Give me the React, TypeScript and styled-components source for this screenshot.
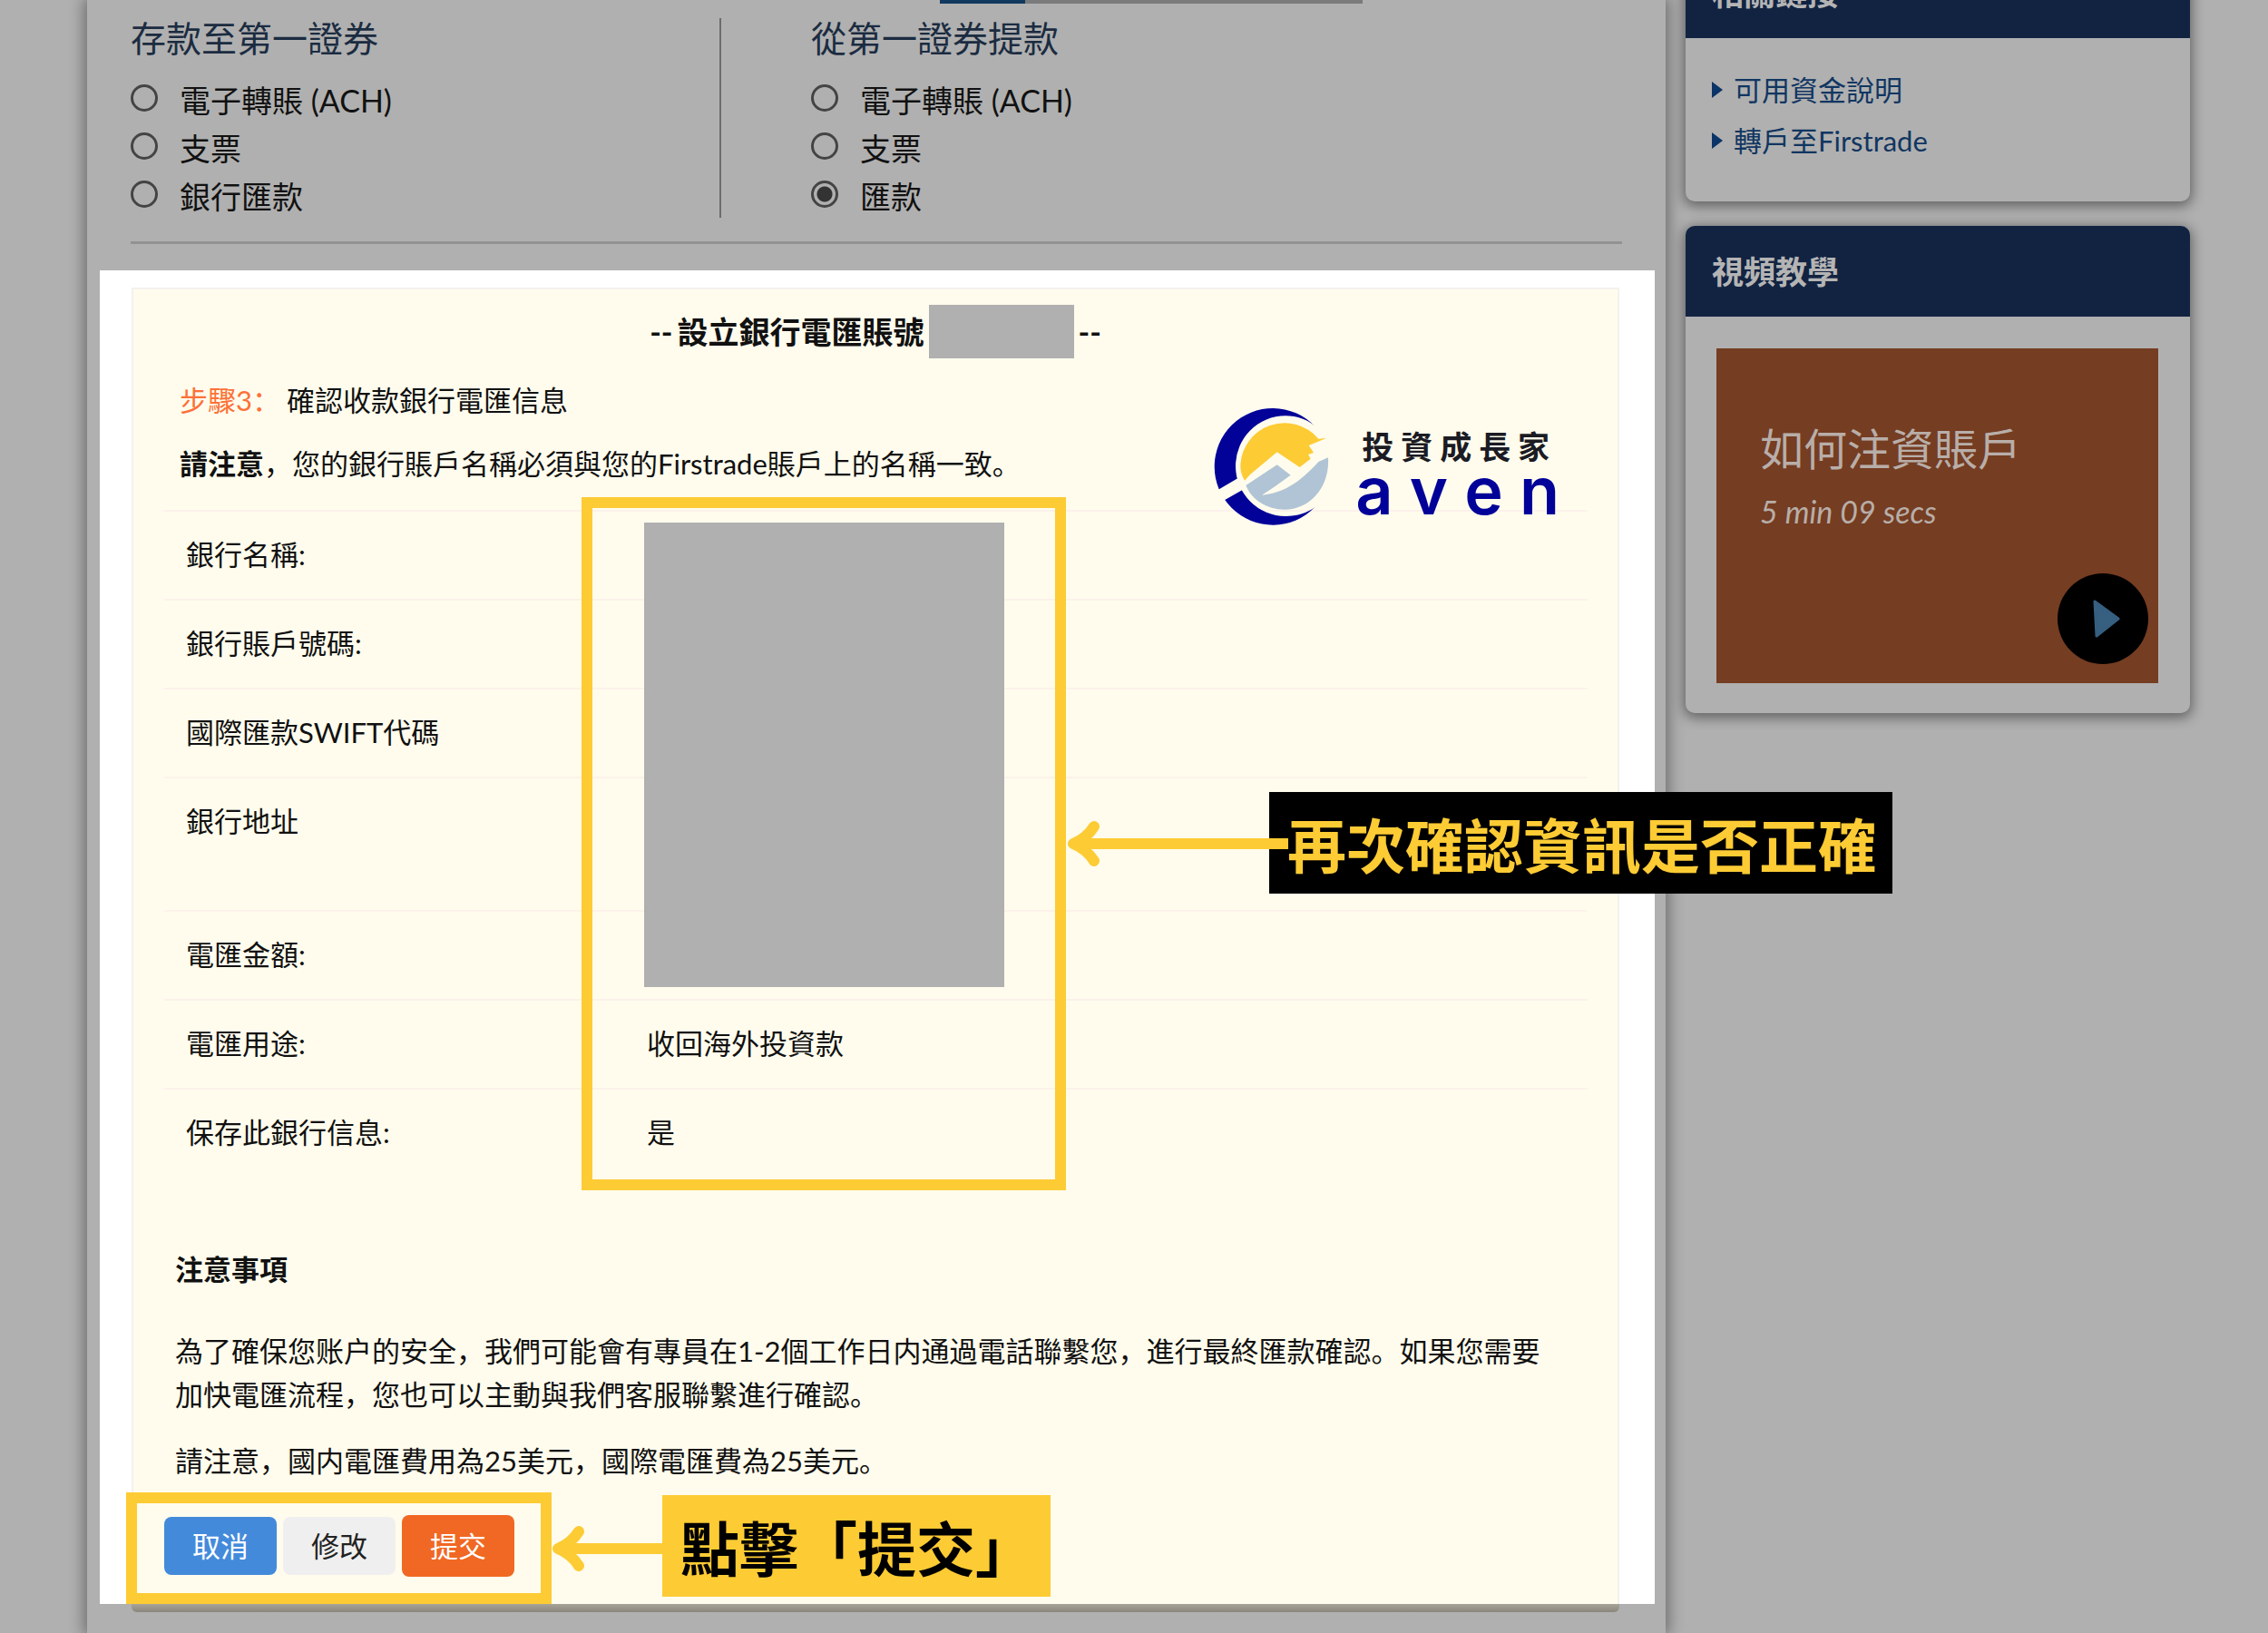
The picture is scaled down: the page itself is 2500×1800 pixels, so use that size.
import React, { useState } from "react";
import styled, { createGlobalStyle } from "styled-components";

const GlobalStyle = createGlobalStyle`
  *, *::before, *::after { box-sizing: border-box; }
  body {
    margin: 0;
    background: #b0b0b0;
    color: #111;
    font-family: Lato, "Noto Sans CJK SC", sans-serif;
    font-size: 31px;
    line-height: 48px;
  }
  h1, h2, h3, p, ul, fieldset { margin: 0; padding: 0; border: 0; }
`;

const Page = styled.div`
  display: grid;
  grid-template-columns: minmax(0, 1fr) 556px;
  column-gap: 22px;
  min-height: 100vh;
  padding: 0 86px 0 96px;
  overflow: hidden;
`;

const MainPanel = styled.main`
  position: relative;
  z-index: 1;
  background: #b0b0b0;
  box-shadow: 0 0 16px 3px rgba(0, 0, 0, 0.4);
`;

const Transfer = styled.section`
  padding: 0 48px;
`;

const TabTrack = styled.div`
  width: 466px;
  height: 4px;
  margin-left: 892px;
  background: linear-gradient(to right, #12395f 94px, #7b7b7b 94px);
`;

const TransferColumns = styled.div`
  display: grid;
  grid-template-columns: 649px 2px minmax(0, 1fr);
  padding: 16px 0 23px;
  border-bottom: 3px solid #929292;
`;

const Divider = styled.div`
  margin-bottom: 3px;
  background: #6c6c6c;
`;

const TransferGroup = styled.fieldset<{ $inset?: boolean }>`
  min-width: 0;
  padding-left: ${(p) => (p.$inset ? "99px" : "0")};
`;

const GroupTitle = styled.legend`
  float: left;
  width: 100%;
  margin-bottom: 20px;
  padding: 0;
  color: #1b2c41;
  font-size: 39px;
  line-height: 44px;
`;

const RadioRow = styled.label`
  clear: both;
  display: flex;
  gap: 24px;
  font-size: 34px;
  line-height: 53px;
`;

const Radio = styled.input`
  appearance: none;
  flex: none;
  width: 30px;
  height: 30px;
  margin: 9px 0 0;
  border: 3px solid #444;
  border-radius: 50%;
  &:checked {
    background: radial-gradient(circle, #333 8px, transparent 9px);
  }
`;

const Highlight = styled.div`
  margin: 29px 12px 0 14px;
  padding: 19px 39px 0 35px;
  background: #fff;
`;

const WireCard = styled.section`
  position: relative;
  padding: 17px 0 30px;
  border: 2px solid #f4f1ee;
  border-bottom: 0;
  background: #fffced;
`;

const CardFoot = styled.div`
  height: 9px;
  margin: 0 51px 0 49px;
  border-radius: 0 0 6px 6px;
  background: linear-gradient(#a8a498, #8b867c);
`;

const WireTitle = styled.h1`
  display: flex;
  align-items: center;
  justify-content: center;
  gap: 5px;
  font-size: 34px;
  line-height: 59px;
`;

const Redaction = styled.span`
  width: 160px;
  height: 59px;
  background: #b0b0b0;
`;

const StepLine = styled.p`
  margin-top: 22px;
  padding-left: 51px;
`;

const StepNumber = styled.span`
  margin-right: 7px;
  color: #fc7138;
`;

const TableArea = styled.div`
  position: relative;
  margin: 27px 33px 0 34px;
`;

const WireTable = styled.table`
  width: 100%;
  border-collapse: separate;
  border-spacing: 0;
  table-layout: fixed;
`;

const Row = styled.tr<{ $tall?: boolean }>`
  height: ${(p) => (p.$tall ? "147px" : "98px")};
  vertical-align: top;
`;

const cell = `
  padding: 23px 0 0;
  border-top: 2px solid #fcf2ea;
  font-weight: 400;
  text-align: left;
`;

const LabelCell = styled.th`
  ${cell}
  width: 532px;
  padding-left: 24px;
`;

const ValueCell = styled.td`
  ${cell}
`;

const ValueRedaction = styled.div`
  position: absolute;
  top: 14px;
  left: 529px;
  width: 397px;
  height: 512px;
  background: #b0b0b0;
`;

const Frame = styled.div<{ $x: number; $y: number; $w: number; $h: number }>`
  position: absolute;
  left: ${(p) => p.$x}px;
  top: ${(p) => p.$y}px;
  width: ${(p) => p.$w}px;
  height: ${(p) => p.$h}px;
  border: 12px solid #fdcb34;
  pointer-events: none;
`;

const Callout = styled.strong<{ $x: number; $y: number; $w: number; $dark?: boolean }>`
  position: absolute;
  left: ${(p) => p.$x}px;
  top: ${(p) => p.$y}px;
  width: ${(p) => p.$w}px;
  padding-left: 20px;
  background: ${(p) => (p.$dark ? "#000" : "#fdcb34")};
  color: ${(p) => (p.$dark ? "#fdcb34" : "#000")};
  font-family: "Noto Sans CJK TC", sans-serif;
  font-size: 65px;
  line-height: 112px;
  white-space: nowrap;
`;

const ArrowSvg = styled.svg<{ $x: number; $y: number }>`
  position: absolute;
  left: ${(p) => p.$x}px;
  top: ${(p) => p.$y}px;
  fill: none;
  stroke: #fdcb34;
  stroke-width: 12px;
  stroke-linejoin: round;
  pointer-events: none;
`;

const Notes = styled.div`
  display: flex;
  flex-direction: column;
  gap: 25px;
  margin-top: 78px;
  padding: 0 62px 0 46px;
`;

const NotesTitle = styled.h2`
  margin-bottom: 17px;
  font-size: 31px;
`;

const Actions = styled.div`
  position: relative;
  display: flex;
  align-items: center;
  gap: 7px;
  margin: 36px 0 0 34px;
`;

const ActionButton = styled.button<{ $bg: string; $fg: string; $tall?: boolean }>`
  width: 124px;
  height: ${(p) => (p.$tall ? "68px" : "64px")};
  padding: 0;
  border: 0;
  border-radius: 8px;
  background: ${(p) => p.$bg};
  color: ${(p) => p.$fg};
  font: inherit;
`;

const Brand = styled.div`
  position: absolute;
  z-index: 1;
  top: 130px;
  right: 64px;
  display: flex;
  align-items: flex-start;
  gap: 28px;
`;

const BrandText = styled.div`
  display: flex;
  flex-direction: column;
  padding-top: 18px;
  font-family: Inter, "Noto Sans CJK TC", sans-serif;
`;

const BrandName = styled.span`
  padding-left: 7px;
  color: #1b1b24;
  font-family: "Noto Sans CJK TC", sans-serif;
  font-size: 35px;
  font-weight: 700;
  line-height: 48px;
`;

const BrandLatin = styled.span`
  color: #020299;
  font-size: 72px;
  font-weight: 600;
  line-height: 52px;
`;

const Sidebar = styled.aside`
  display: flex;
  flex-direction: column;
  gap: 27px;
  margin-top: -58px;
`;

const SideCard = styled.section`
  border-radius: 10px;
  background: #b0b0b0;
  box-shadow: 0 3px 14px 2px rgba(0, 0, 0, 0.45);
`;

const SideTitle = styled.h2`
  padding-left: 29px;
  border-radius: 10px 10px 0 0;
  background: #122342;
  color: #b4b4b4;
  font-size: 35px;
  line-height: 100px;
`;

const LinkList = styled.ul`
  padding: 29px 29px 39px;
  list-style: none;
`;

const SideLink = styled.a`
  display: flex;
  align-items: center;
  gap: 12px;
  color: #103661;
  line-height: 56px;
  text-decoration: none;
`;

const VideoWrap = styled.div`
  padding: 35px 35px 33px 34px;
`;

const Video = styled.div`
  position: relative;
  height: 369px;
  padding: 79px 48px;
  background: #753d22;
  color: #b8aea9;
`;

const VideoTitle = styled.h3`
  font-size: 48px;
  font-weight: 400;
  line-height: 64px;
`;

const VideoTime = styled.p`
  margin-top: 13px;
  font-size: 34px;
  font-style: italic;
`;

const PlayButton = styled.button`
  position: absolute;
  right: 11px;
  bottom: 21px;
  display: flex;
  align-items: center;
  justify-content: center;
  width: 100px;
  height: 100px;
  padding: 0 0 0 8px;
  border: 0;
  border-radius: 50%;
  background: #000;
`;

function RadioGroup(props: { name: string; title: string; options: string[]; initial?: string; inset?: boolean }) {
  const [value, setValue] = useState(props.initial ?? "");
  return (
    <TransferGroup $inset={props.inset}>
      <GroupTitle>{props.title}</GroupTitle>
      {props.options.map((option) => (
        <RadioRow key={option}>
          <Radio type="radio" name={props.name} checked={value === option} onChange={() => setValue(option)} />
          {option}
        </RadioRow>
      ))}
    </TransferGroup>
  );
}

function Arrow({ x, y, length }: { x: number; y: number; length: number }) {
  return (
    <ArrowSvg $x={x} $y={y} width={length} height={52} viewBox={`0 0 ${length} 52`} aria-hidden="true">
      <path d={`M8 26H${length}`} />
      <path d="M31 7C26 15 18 22 8 26C18 30 26 37 31 45" strokeLinecap="round" />
    </ArrowSvg>
  );
}

function BrandMark() {
  return (
    <svg width="128" height="130" viewBox="116 88 384 390" aria-hidden="true">
      <path fill="#020299" d="M450 150A193 193 0 1 0 450 418C428 436 392 448 353 448A165 166 0 0 1 353 116C392 116 428 130 450 150Z" />
      <path fill="#fffced" d="M118 368L196 322L220 356L146 398Z" />
      <path fill="#fdcb34" d="M218 330C208 312 204 298 204 283A146 146 0 0 1 462 192L488 190L430 214L446 238L428 244L436 258L400 286L325 236L236 310Z" />
      <path fill="#b0c4d6" d="M222 346L325 278L370 312L318 350L275 378C340 372 396 342 462 268L494 254C500 350 436 426 350 426C290 426 240 392 222 346Z" />
    </svg>
  );
}

const rows = [
  { label: "銀行名稱:", value: "" },
  { label: "銀行賬戶號碼:", value: "" },
  { label: "國際匯款SWIFT代碼", value: "" },
  { label: "銀行地址", value: "", tall: true },
  { label: "電匯金額:", value: "" },
  { label: "電匯用途:", value: "收回海外投資款" },
  { label: "保存此銀行信息:", value: "是" },
];

const links = ["可用資金說明", "轉戶至Firstrade"];

export default function App() {
  return (
    <>
      <GlobalStyle />
      <Page>
        <MainPanel>
          <Transfer>
            <TabTrack />
            <TransferColumns>
              <RadioGroup name="deposit" title="存款至第一證券" options={["電子轉賬 (ACH)", "支票", "銀行匯款"]} />
              <Divider />
              <RadioGroup
                name="withdraw"
                title="從第一證券提款"
                options={["電子轉賬 (ACH)", "支票", "匯款"]}
                initial="匯款"
                inset
              />
            </TransferColumns>
          </Transfer>

          <Highlight>
            <WireCard>
              <WireTitle>
                <span>--</span>
                <span>設立銀行電匯賬號</span>
                <Redaction />
                <span>--</span>
              </WireTitle>
              <StepLine>
                <StepNumber>步驟3：</StepNumber>
                確認收款銀行電匯信息
              </StepLine>
              <StepLine>
                <b>請注意</b>，您的銀行賬戶名稱必須與您的Firstrade賬戶上的名稱一致。
              </StepLine>
              <Brand>
                <BrandMark />
                <BrandText>
                  <BrandName>投 資 成 長 家</BrandName>
                  <BrandLatin>a v e n</BrandLatin>
                </BrandText>
              </Brand>

              <TableArea>
                <WireTable>
                  <tbody>
                    {rows.map((row) => (
                      <Row key={row.label} $tall={row.tall}>
                        <LabelCell scope="row">{row.label}</LabelCell>
                        <ValueCell>{row.value}</ValueCell>
                      </Row>
                    ))}
                  </tbody>
                </WireTable>
                <ValueRedaction />
                <Frame $x={460} $y={-14} $w={534} $h={764} />
                <Callout $x={1218} $y={311} $w={687} $dark>
                  再次確認資訊是否正確
                </Callout>
                <Arrow x={994} y={342} length={245} />
              </TableArea>

              <Notes>
                <NotesTitle>注意事項</NotesTitle>
                <p>
                  為了確保您账户的安全，我們可能會有專員在1-2個工作日内通過電話聯繫您，進行最終匯款確認。如果您需要加快電匯流程，您也可以主動與我們客服聯繫進行確認。
                </p>
                <p>請注意，國内電匯費用為25美元，國際電匯費為25美元。</p>
              </Notes>

              <Actions>
                <ActionButton type="button" $bg="#448adb" $fg="#fff">
                  取消
                </ActionButton>
                <ActionButton type="button" $bg="#efefef" $fg="#222">
                  修改
                </ActionButton>
                <ActionButton type="button" $bg="#f06823" $fg="#fff" $tall>
                  提交
                </ActionButton>
                <Frame $x={-42} $y={-25} $w={469} $h={123} />
                <Arrow x={426} y={11} length={124} />
                <Callout $x={549} $y={-22} $w={428}>
                  點擊「提交」
                </Callout>
              </Actions>
            </WireCard>
          </Highlight>
          <CardFoot />
        </MainPanel>

        <Sidebar>
          <SideCard>
            <SideTitle>相關鏈接</SideTitle>
            <LinkList>
              {links.map((text) => (
                <li key={text}>
                  <SideLink href="#">
                    <svg width="12" height="18" viewBox="0 0 12 18" aria-hidden="true">
                      <path d="M0 0L12 9L0 18Z" fill="#0b3468" />
                    </svg>
                    {text}
                  </SideLink>
                </li>
              ))}
            </LinkList>
          </SideCard>
          <SideCard>
            <SideTitle>視頻教學</SideTitle>
            <VideoWrap>
              <Video>
                <VideoTitle>如何注資賬戶</VideoTitle>
                <VideoTime>5 min 09 secs</VideoTime>
                <PlayButton type="button" aria-label="播放">
                  <svg width="30" height="42" viewBox="0 0 30 42" aria-hidden="true">
                    <path d="M2 2L28 21L4 40Z" fill="#365f80" stroke="#365f80" strokeWidth="3" strokeLinejoin="round" />
                  </svg>
                </PlayButton>
              </Video>
            </VideoWrap>
          </SideCard>
        </Sidebar>
      </Page>
    </>
  );
}
